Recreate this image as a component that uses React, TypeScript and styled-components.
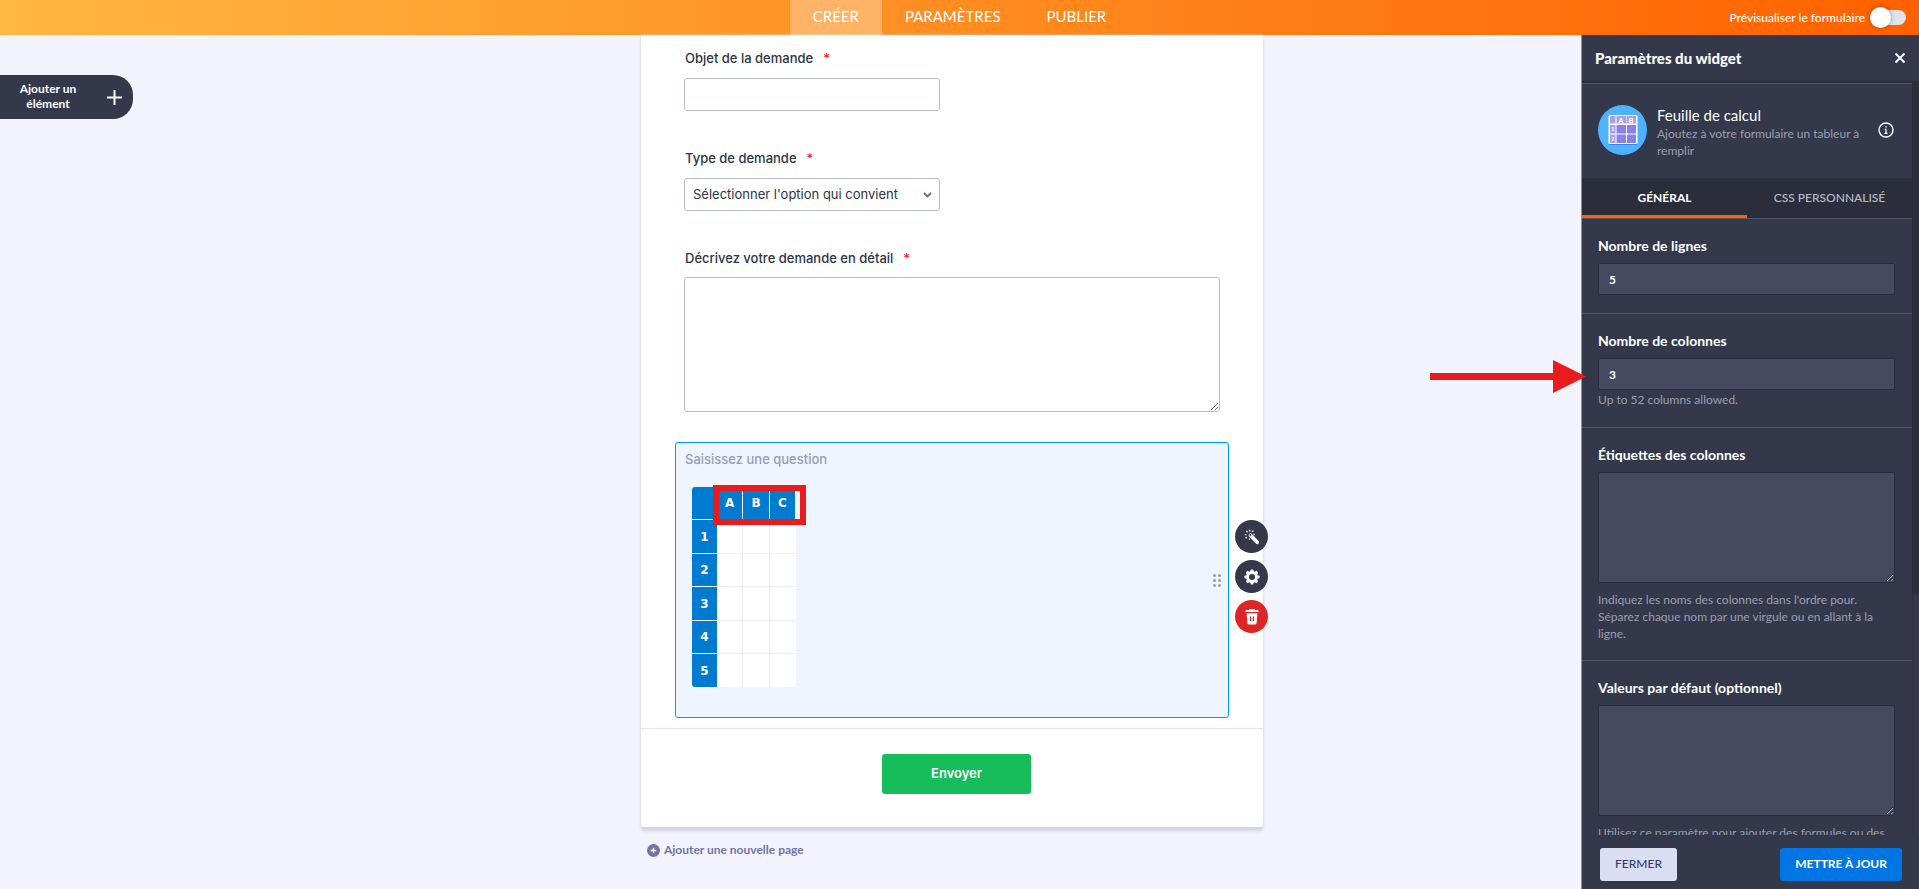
import React from 'react';
import styled, { createGlobalStyle, css } from 'styled-components';

const GlobalStyle = createGlobalStyle`
  *, *::before, *::after { box-sizing: border-box; }
  body { margin: 0; }
  button, input, textarea, select { font: inherit; margin: 0; }
`;

const ui = `Lato, "Liberation Sans", sans-serif`;
const formFont = `Inter, "Liberation Sans", sans-serif`;
const navy = '#34384b';
const red = '#e81c1c';

const Page = styled.div`
  display: flex;
  flex-direction: column;
  height: 100vh;
  overflow: hidden;
  background: #f3f3fe;
  font-family: ${ui};
`;

const TopBar = styled.header`
  display: grid;
  grid-template-columns: 1fr auto 1fr;
  flex: none;
  height: 35px;
  background: linear-gradient(90deg, #ffb841, #ff6100);
  color: #fff;
`;

const Nav = styled.nav`
  grid-column: 2;
  display: flex;
`;

const NavLink = styled.a<{ $active?: boolean }>`
  display: flex;
  align-items: center;
  padding: 0 23px 4px;
  font-size: 15px;
  color: #fff;
  text-decoration: none;
  background: ${(p) => (p.$active ? '#ffb366' : 'transparent')};
`;

const PreviewToggle = styled.label`
  display: flex;
  align-items: center;
  justify-content: flex-end;
  gap: 5px;
  padding: 0 13px 1px 0;
  font-size: 12px;
  font-weight: 500;
`;

const Switch = styled.input`
  appearance: none;
  display: flex;
  align-items: center;
  width: 36px;
  height: 15px;
  border-radius: 8px;
  background: #e1e2ea;

  &::before {
    content: '';
    width: 21px;
    height: 21px;
    border-radius: 50%;
    background: #fff;
    box-shadow: 0 0 4px rgba(0, 0, 0, 0.35);
  }
`;

const Workspace = styled.main`
  display: grid;
  grid-template-columns: 1fr 622px 1fr;
  flex: 1;
  min-height: 0;
  padding-right: 15px;
`;

const AddElement = styled.button`
  justify-self: start;
  align-self: start;
  display: flex;
  align-items: center;
  gap: 30px;
  height: 44px;
  margin-top: 40px;
  padding: 0 11px 0 19px;
  border: 0;
  border-radius: 0 20px 20px 0;
  background: ${navy};
  color: #fff;
  font-size: 12px;
  font-weight: 700;
  line-height: 15px;
`;

const AddElementText = styled.span`
  width: 58px;
  padding-bottom: 2px;
  text-align: center;
`;

const Center = styled.div`
  min-height: 0;
`;

const FormCard = styled.form`
  background: #fff;
  border-radius: 0 0 4px 4px;
  box-shadow: 0 0 2px #dcdcef, 0 4px 3px #d0d3e3;
  font-family: ${formFont};
  font-size: 13px;
  color: #2c3345;
`;

const Questions = styled.div`
  padding: 15px 34px 10px;
`;

const Field = styled.div`
  display: flex;
  flex-direction: column;
  align-items: flex-start;
  gap: 12px;
  padding: 0 9px;
  margin-bottom: 39px;

  &:nth-child(3) {
    gap: 11px;
    margin-bottom: 30px;
  }
`;

const FieldLabel = styled.label`
  padding-left: 1px;
  line-height: 16px;
  font-weight: 500;
`;

const Required = styled.span`
  margin-left: 10px;
  color: #ff1a1a;
`;

const control = css`
  border: 1px solid #b8bdc9;
  border-radius: 3px;
  background-color: #fff;
  color: #2c3345;
`;

const TextInput = styled.input`
  ${control}
  width: 256px;
  height: 33px;
`;

const Dropdown = styled.div`
  display: grid;
  align-items: center;
  width: 256px;

  & > * {
    grid-area: 1 / 1;
  }

  & > svg {
    justify-self: end;
    margin-right: 8px;
    pointer-events: none;
  }
`;

const Select = styled.select`
  ${control}
  appearance: none;
  width: 100%;
  height: 33px;
  padding: 0 8px 1px;
`;

const LongText = styled.textarea`
  ${control}
  display: block;
  width: 100%;
  height: 135px;
  resize: vertical;
`;

const WidgetBlock = styled.section`
  position: relative;
  height: 276px;
  padding: 8px 9px;
  border: 1px solid #0099ff;
  border-radius: 3px;
  background: #eef5ff;
`;

const WidgetQuestion = styled.div`
  margin-bottom: 20px;
  line-height: 16px;
  font-weight: 500;
  color: #979db0;
`;

const Sheet = styled.table`
  width: 104px;
  margin-left: 7px;
  border-collapse: separate;
  border-spacing: 0;
  border-radius: 3px;
  overflow: hidden;
  table-layout: fixed;
  font-family: 'DejaVu Sans', sans-serif;
  font-size: 12px;

  th,
  td {
    height: 33px;
    padding: 0;
    text-align: center;
  }

  tbody tr:nth-child(odd) > * {
    height: 34px;
  }

  tbody tr:last-child > * {
    height: 33px;
  }

  th {
    background: #007bcf;
    color: #fff;
    border-bottom: 1px solid #fff;
  }

  th:first-child {
    width: 25px;
  }

  thead th + th {
    border-right: 1px solid #fff;
  }

  td {
    background: #fff;
    border-right: 1px solid #ededf0;
    border-bottom: 1px solid #ededf0;
  }

  tr > :last-child {
    border-right-color: #fff;
  }

  tbody tr:last-child > * {
    border-bottom: 0;
  }
`;

const HeaderHighlight = styled.div`
  position: absolute;
  left: 37px;
  top: 42px;
  width: 93px;
  height: 40px;
  border: 6px solid ${red};
`;

const DragHandle = styled.span`
  position: absolute;
  right: 7px;
  top: 131px;
  display: grid;
  grid-template-columns: 3px 3px;
  gap: 2px;
`;

const HandleDot = styled.i`
  height: 3px;
  border-radius: 50%;
  background: #979db0;
`;

const BlockActions = styled.div`
  position: absolute;
  left: calc(100% + 7px);
  top: 77px;
  display: flex;
  flex-direction: column;
  gap: 7px;
`;

const RoundButton = styled.button<{ $danger?: boolean }>`
  display: grid;
  place-items: center;
  width: 33px;
  height: 33px;
  padding: 0;
  border: 0;
  border-radius: 50%;
  background: ${(p) => (p.$danger ? '#dc2626' : navy)};
`;

const SubmitRow = styled.div`
  display: flex;
  justify-content: center;
  padding: 25px 0 33px 9px;
  border-top: 1px solid #e3e5f0;
`;

const SubmitButton = styled.button`
  width: 149px;
  height: 40px;
  padding: 0 6px 2px;
  border: 0;
  border-radius: 3px;
  background: #18bd5b;
  color: #fff;
  font-weight: 600;
`;

const AddPage = styled.button`
  display: flex;
  align-items: center;
  gap: 4px;
  margin: 15px 0 0 6px;
  padding: 0;
  border: 0;
  background: none;
  font-size: 12px;
  font-weight: 700;
  line-height: 16px;
  color: #6f76a7;
`;

const Panel = styled.aside`
  position: relative;
  justify-self: end;
  display: flex;
  flex-direction: column;
  width: 338px;
  min-height: 0;
  margin-right: -15px;
  border-left: 1px solid #8b8e9c;
  background: ${navy};
  color: #fff;
`;

const PanelHeader = styled.div`
  display: flex;
  align-items: center;
  justify-content: space-between;
  flex: none;
  height: 48px;
  padding: 0 13px;
  border-bottom: 2px solid #2b2d3b;
`;

const PanelTitle = styled.h2`
  margin: 0;
  font-size: 15px;
  font-weight: 900;
`;

const IconButton = styled.button`
  display: grid;
  place-items: center;
  padding: 0;
  border: 0;
  background: none;
  color: #fff;
`;

const PanelBody = styled.div`
  display: flex;
  flex: 1;
  min-height: 0;
`;

const PanelContent = styled.div`
  flex: 1;
  overflow: hidden;
`;

const ScrollTrack = styled.div`
  width: 7px;
  border-left: 2px solid #303345;
`;

const ScrollThumb = styled.div`
  height: 68%;
  margin-left: -2px;
  background: #2b2d3b;
`;

const WidgetInfo = styled.div`
  display: flex;
  align-items: center;
  height: 95px;
  padding: 0 18px 3px 16px;
  border-top: 1px solid #54575f;
`;

const WidgetText = styled.div`
  flex: 1;
  padding: 4px 0 0 10px;
`;

const WidgetName = styled.h3`
  margin: 0;
  font-size: 15px;
  font-weight: 400;
  line-height: 20px;
`;

const Muted = styled.p`
  margin: 0;
  font-size: 12px;
  line-height: 17px;
  color: #9a9fb0;
`;

const Tabs = styled.div`
  display: grid;
  grid-template-columns: 1fr 1fr;
  height: 41px;
  background: #2b2d3b;
  border-bottom: 1px solid #54575f;
`;

const Tab = styled.button<{ $active?: boolean }>`
  padding: 1px 0 0;
  border: 0;
  border-bottom: 3px solid ${(p) => (p.$active ? '#ff6100' : 'transparent')};
  background: none;
  font-size: 12px;
  font-weight: ${(p) => (p.$active ? 700 : 500)};
  color: ${(p) => (p.$active ? '#fff' : '#b9bcc8')};
`;

const Group = styled.div`
  padding: 19px 17px 18px 16px;

  & + & {
    border-top: 1px solid #54575f;
  }
`;

const GroupLabel = styled.label`
  display: block;
  margin-bottom: 9px;
  font-size: 14px;
  font-weight: 700;
  line-height: 16px;
`;

const dark = css`
  display: block;
  width: 100%;
  border: 1px solid #2a2d3b;
  border-radius: 2px;
  background: #454a60;
  color: #fff;
  font-size: 12px;
  font-weight: 700;
`;

const DarkInput = styled.input`
  ${dark}
  height: 32px;
  padding: 0 10px;
  & + p { margin-top: 1px; margin-bottom: 1px; }
`;

const DarkTextarea = styled.textarea`
  ${dark}
  height: 111px;
  padding: 8px 10px;
  resize: vertical;
  & + p { margin-top: 8px; }
`;

const PanelFooter = styled.div`
  display: flex;
  justify-content: space-between;
  flex: none;
  height: 54px;
  padding: 13px 17px 8px 18px;
`;

const FooterButton = styled.button<{ $primary?: boolean }>`
  padding: 0 15px 2px;
  border: 0;
  border-radius: 3px;
  font-size: 12px;
  font-weight: ${(p) => (p.$primary ? 700 : 500)};
  background: ${(p) => (p.$primary ? '#0075e3' : '#dadef3')};
  color: ${(p) => (p.$primary ? '#fff' : '#343c6a')};
`;

const Arrow = styled.svg`
  position: absolute;
  right: calc(100% - 4px);
  top: 325px;
`;

const SheetIcon = () => (
  <svg width="49" height="50" viewBox="0 0 49 50" aria-hidden="true">
    <ellipse cx="24.5" cy="25" rx="24.5" ry="25" fill="#4fb2ff" />
    <rect x="11" y="12" width="28" height="28" rx="1" fill="#3a86d8" />
    <rect x="10.500" y="10" width="29" height="29" rx="1.500" fill="#fff" />
    <path d="M12 11h5.500v7.500H12zM18.500 11H28v7.500h-9.500zM28.500 11H38v7.500h-9.500z" fill="#aa9fe9" />
    <path d="M12 20h5.500v8.500H12zM12 29.500h5.500V38H12z" fill="#aa9fe9" />
    <path d="M18.500 20H28v8.500h-9.500zM29 20h9v8.500h-9zM18.500 29.500H28V38h-9.500zM29 29.500h9V38h-9z" fill="#8a80e8" />
    <g fill="#fff" fontFamily="Liberation Sans, sans-serif" fontWeight="700">
      <text x="20.500" y="17.500" fontSize="7">A</text>
      <text x="30.500" y="17.500" fontSize="7">B</text>
      <text x="13.500" y="26" fontSize="5">1</text>
      <text x="13.500" y="36" fontSize="5">2</text>
    </g>
  </svg>
);

const WandIcon = () => (
  <svg width="16" height="16" viewBox="0 0 16 16" aria-hidden="true">
    <path d="M6.500 6.300 13.200 13.300" stroke="#fff" strokeWidth="3.800" strokeLinecap="round" />
    <circle cx="6.400" cy="6.100" r="1" fill={navy} />
    <path
      d="M5.600.800v1.600M9 1.500 8.300 3M2.300 2l1.200 1.200M.800 5.600h1.600M1.500 9 3 8.300M10.600 5.500H9.400M5.400 10.800V9.600"
      stroke="#fff"
      strokeWidth="1.400"
    />
  </svg>
);

const GearIcon = () => (
  <svg width="16" height="16" viewBox="0 0 16 16" aria-hidden="true">
    {[0, 45, 90, 135].map((a) => (
      <rect key={a} x="6.400" y="0.400" width="3.200" height="15.200" rx="1" fill="#fff" transform={`rotate(${a} 8 8)`} />
    ))}
    <circle cx="8" cy="8" r="6" fill="#fff" />
    <circle cx="8" cy="8" r="3" fill={navy} />
  </svg>
);

const TrashIcon = () => (
  <svg width="14" height="16" viewBox="0 0 14 16" aria-hidden="true">
    <path d="M4.500 0h5l.600 1H13q.500 0 .500.500V3H.500V1.500Q.500 1 1 1h2.900z" fill="#fff" />
    <path d="M1.600 4.200h10.800l-.800 10q-.100 1.300-1.400 1.300H3.800q-1.300 0-1.400-1.300z" fill="#fff" />
    <path d="M5.600 7.500v4.500M8.400 7.500v4.500" stroke="#dc2626" strokeWidth="1.300" />
  </svg>
);

const columns = ['A', 'B', 'C'];
const rows = [1, 2, 3, 4, 5];

export default function App() {
  return (
    <Page>
      <GlobalStyle />
      <TopBar>
        <Nav>
          <NavLink href="#creer" $active>CRÉER</NavLink>
          <NavLink href="#parametres">PARAMÈTRES</NavLink>
          <NavLink href="#publier">PUBLIER</NavLink>
        </Nav>
        <PreviewToggle>
          Prévisualiser le formulaire
          <Switch type="checkbox" role="switch" />
        </PreviewToggle>
      </TopBar>

      <Workspace>
        <AddElement type="button">
          <AddElementText>Ajouter un élément</AddElementText>
          <svg width="15" height="15" viewBox="0 0 15 15" aria-hidden="true">
            <path d="M7.500 0v15M0 7.500h15" stroke="#fff" strokeWidth="2" />
          </svg>
        </AddElement>

        <Center>
          <FormCard onSubmit={(e) => e.preventDefault()}>
            <Questions>
              <Field>
                <FieldLabel htmlFor="objet">
                  Objet de la demande<Required>*</Required>
                </FieldLabel>
                <TextInput id="objet" type="text" />
              </Field>
              <Field>
                <FieldLabel htmlFor="type">
                  Type de demande<Required>*</Required>
                </FieldLabel>
                <Dropdown>
                  <Select id="type">
                    <option>Sélectionner l'option qui convient</option>
                  </Select>
                  <svg width="9" height="6" viewBox="0 0 9 6" aria-hidden="true">
                    <path d="m1 1 3.500 3.500L8 1" fill="none" stroke="#5f6b80" strokeWidth="1.800" />
                  </svg>
                </Dropdown>
              </Field>
              <Field>
                <FieldLabel htmlFor="detail">
                  Décrivez votre demande en détail<Required>*</Required>
                </FieldLabel>
                <LongText id="detail" />
              </Field>
              <WidgetBlock>
                <WidgetQuestion>Saisissez une question</WidgetQuestion>
                <Sheet>
                  <thead>
                    <tr>
                      <th />
                      {columns.map((c) => (
                        <th key={c} scope="col">{c}</th>
                      ))}
                    </tr>
                  </thead>
                  <tbody>
                    {rows.map((r) => (
                      <tr key={r}>
                        <th scope="row">{r}</th>
                        {columns.map((c) => (
                          <td key={c} />
                        ))}
                      </tr>
                    ))}
                  </tbody>
                </Sheet>
                <HeaderHighlight />
                <DragHandle>
                  {[0, 1, 2, 3, 4, 5].map((i) => (
                    <HandleDot key={i} />
                  ))}
                </DragHandle>
                <BlockActions>
                  <RoundButton type="button" aria-label="Assistant"><WandIcon /></RoundButton>
                  <RoundButton type="button" aria-label="Propriétés"><GearIcon /></RoundButton>
                  <RoundButton type="button" aria-label="Supprimer" $danger><TrashIcon /></RoundButton>
                </BlockActions>
              </WidgetBlock>
            </Questions>
            <SubmitRow>
              <SubmitButton type="submit">Envoyer</SubmitButton>
            </SubmitRow>
          </FormCard>
          <AddPage type="button">
            <svg width="13" height="13" viewBox="0 0 13 13" aria-hidden="true">
              <circle cx="6.500" cy="6.500" r="6.500" fill="#6f76a7" />
              <path d="M6.500 3.700v5.600M3.700 6.500h5.600" stroke="#fff" strokeWidth="1.400" />
            </svg>
            Ajouter une nouvelle page
          </AddPage>
        </Center>

        <Panel>
          <PanelHeader>
            <PanelTitle>Paramètres du widget</PanelTitle>
            <IconButton type="button" aria-label="Fermer le panneau">
              <svg width="12" height="12" viewBox="0 0 12 12" aria-hidden="true">
                <path d="m1.500 1.500 9 9M10.500 1.500l-9 9" stroke="currentColor" strokeWidth="1.800" />
              </svg>
            </IconButton>
          </PanelHeader>
          <PanelBody>
            <PanelContent>
              <WidgetInfo>
                <SheetIcon />
                <WidgetText>
                  <WidgetName>Feuille de calcul</WidgetName>
                  <Muted>Ajoutez à votre formulaire un tableur à remplir</Muted>
                </WidgetText>
                <IconButton type="button" aria-label="Informations">
                  <svg width="16" height="16" viewBox="0 0 16 16" aria-hidden="true">
                    <circle cx="8" cy="8" r="7" fill="none" stroke="#fff" strokeWidth="1.400" />
                    <path d="M8 4v1.600M6.700 7.300H8v4M6.500 11.400h3" fill="none" stroke="#fff" strokeWidth="1.300" />
                  </svg>
                </IconButton>
              </WidgetInfo>
              <Tabs role="tablist">
                <Tab type="button" role="tab" aria-selected="true" $active>GÉNÉRAL</Tab>
                <Tab type="button" role="tab" aria-selected="false">CSS PERSONNALISÉ</Tab>
              </Tabs>
              <Group>
                <GroupLabel htmlFor="lignes">Nombre de lignes</GroupLabel>
                <DarkInput id="lignes" type="text" defaultValue="5" />
              </Group>
              <Group>
                <GroupLabel htmlFor="colonnes">Nombre de colonnes</GroupLabel>
                <DarkInput id="colonnes" type="text" defaultValue="3" />
                <Muted>Up to 52 columns allowed.</Muted>
              </Group>
              <Group>
                <GroupLabel htmlFor="etiquettes">Étiquettes des colonnes</GroupLabel>
                <DarkTextarea id="etiquettes" />
                <Muted>
                  Indiquez les noms des colonnes dans l'ordre pour. Séparez chaque nom par une virgule ou en allant à la
                  ligne.
                </Muted>
              </Group>
              <Group>
                <GroupLabel htmlFor="valeurs">Valeurs par défaut (optionnel)</GroupLabel>
                <DarkTextarea id="valeurs" />
                <Muted>Utilisez ce paramètre pour ajouter des formules ou des</Muted>
              </Group>
            </PanelContent>
            <ScrollTrack>
              <ScrollThumb />
            </ScrollTrack>
          </PanelBody>
          <PanelFooter>
            <FooterButton type="button">FERMER</FooterButton>
            <FooterButton type="button" $primary>METTRE À JOUR</FooterButton>
          </PanelFooter>
          <Arrow width="156" height="33" viewBox="0 0 156 33" aria-hidden="true">
            <path d="M0 13h123V0l33 16.500L123 33V20H0z" fill={red} />
          </Arrow>
        </Panel>
      </Workspace>
    </Page>
  );
}
